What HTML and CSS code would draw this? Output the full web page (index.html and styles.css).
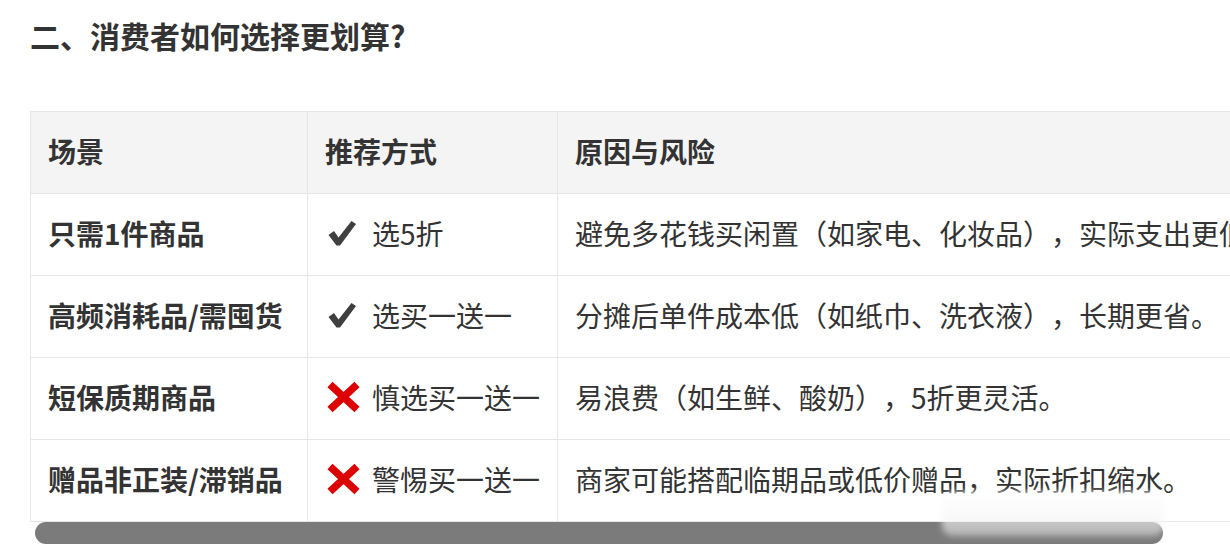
FILE: index.html
```html
<!DOCTYPE html>
<html lang="zh">
<head>
<meta charset="utf-8">
<link rel="stylesheet" href="styles.css">
</head>
<body>
<div class="page">
  <h2 class="title">二、消费者如何选择更划算?</h2>
  <div class="table-wrap">
    <table class="grid">
      <colgroup>
        <col class="c1"><col class="c2"><col class="c3">
      </colgroup>
      <thead>
        <tr><th>场景</th><th>推荐方式</th><th>原因与风险</th></tr>
      </thead>
      <tbody>
        <tr>
          <td class="name">只需1件商品</td>
          <td><span class="pick"><svg class="ico" viewBox="0 0 30 26"><path d="M1.5 15 L7 11 L11.5 17.5 L24.5 1 L29 4 L13 25.5 L9.5 25.5 Z" fill="#3f3f3f"/></svg>选5折</span></td>
          <td>避免多花钱买闲置（如家电、化妆品），实际支出更低。</td>
        </tr>
        <tr>
          <td class="name">高频消耗品/需囤货</td>
          <td><span class="pick"><svg class="ico" viewBox="0 0 30 26"><path d="M1.5 15 L7 11 L11.5 17.5 L24.5 1 L29 4 L13 25.5 L9.5 25.5 Z" fill="#3f3f3f"/></svg>选买一送一</span></td>
          <td>分摊后单件成本低（如纸巾、洗衣液），长期更省。</td>
        </tr>
        <tr>
          <td class="name">短保质期商品</td>
          <td><span class="pick"><svg class="ico x" viewBox="0 0 35 32"><path d="M4 3.5 L31 28.5 M31 3.5 L4 28.5" stroke="#dd0000" stroke-width="7.5" stroke-linecap="butt"/></svg>慎选买一送一</span></td>
          <td>易浪费（如生鲜、酸奶），5折更灵活。</td>
        </tr>
        <tr>
          <td class="name">赠品非正装/滞销品</td>
          <td><span class="pick"><svg class="ico x" viewBox="0 0 35 32"><path d="M4 3.5 L31 28.5 M31 3.5 L4 28.5" stroke="#dd0000" stroke-width="7.5" stroke-linecap="butt"/></svg>警惕买一送一</span></td>
          <td>商家可能搭配临期品或低价赠品，实际折扣缩水。</td>
        </tr>
      </tbody>
    </table>
  </div>
  <div class="scrollbar"><div class="thumb"></div></div>
  <div class="watermark"></div>
</div>
</body>
</html>
```

FILE: styles.css
```css
html, body {
  margin: 0;
  padding: 0;
  background: #ffffff;
  overflow: hidden;
}
body {
  font-family: "Noto Sans CJK SC", "Noto Sans", sans-serif;
  color: #333333;
  text-spacing-trim: space-all;
}
.page {
  position: relative;
  width: 1230px;
  height: 546px;
  padding: 15px 0 0 30px;
  box-sizing: border-box;
}
.title {
  margin: 0;
  font-size: 30px;
  line-height: 40px;
  font-weight: 700;
  color: #333333;
}
.table-wrap {
  margin-top: 56px;
  width: 1200px;
  overflow: hidden;
}
.grid {
  border-collapse: collapse;
  table-layout: fixed;
  width: 1290px;
}
.c1 { width: 277px; }
.c2 { width: 250px; }
.c3 { width: 763px; }
.grid th,
.grid td {
  border: 1px solid #e6e6e6;
  height: 82px;
  padding: 0 0 4px 17px;
  box-sizing: border-box;
  font-size: 28px;
  line-height: 40px;
  text-align: left;
  white-space: nowrap;
  vertical-align: middle;
}
.grid th {
  background: #f4f4f4;
  font-weight: 700;
}
.grid td {
  font-weight: 400;
}
.grid td.name {
  font-weight: 700;
}
.pick {
  display: flex;
  align-items: center;
  gap: 15px;
}
.ico {
  width: 30px;
  height: 26px;
  margin-left: 2px;
  flex: none;
}
.ico.x {
  width: 35px;
  height: 32px;
  margin-left: 1px;
  margin-right: -4px;
}
.scrollbar {
  margin-top: 0;
  height: 22px;
}
.thumb {
  margin-left: 5px;
  width: 1128px;
  height: 22px;
  border-radius: 11px;
  background: #7b7b7b;
}
.watermark {
  position: absolute;
  left: 942px;
  top: 492px;
  width: 222px;
  height: 44px;
  border-radius: 10px;
  background: linear-gradient(to bottom, rgba(255,255,255,0.9), rgba(235,235,235,0.5));
  filter: blur(3px);
}
```
